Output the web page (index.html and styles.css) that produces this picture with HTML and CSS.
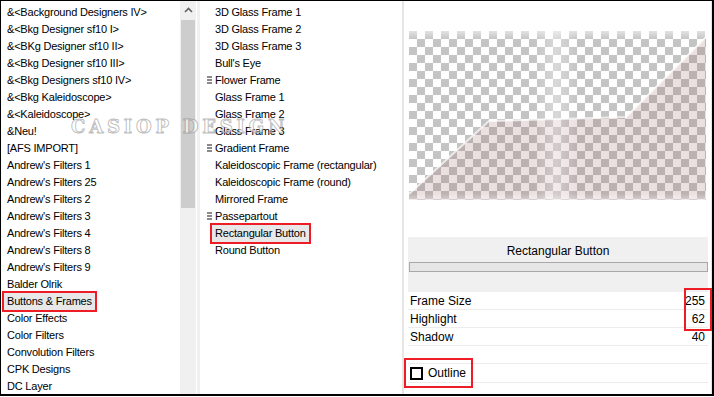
FILE: index.html
```html
<!DOCTYPE html>
<html lang="en">

<head>
    <meta charset="UTF-8">
    <title>Buttons &amp; Frames</title>
    <link rel="stylesheet" href="styles.css">
</head>

<body>
    <div class="window">
        <!-- filter categories -->
        <div class="category-list">
            <div class="item">&amp;&lt;Background Designers IV&gt;</div>
            <div class="item">&amp;&lt;Bkg Designer sf10 I&gt;</div>
            <div class="item">&amp;&lt;BKg Designer sf10 II&gt;</div>
            <div class="item">&amp;&lt;Bkg Designer sf10 III&gt;</div>
            <div class="item">&amp;&lt;Bkg Designers sf10 IV&gt;</div>
            <div class="item">&amp;&lt;Bkg Kaleidoscope&gt;</div>
            <div class="item">&amp;&lt;Kaleidoscope&gt;</div>
            <div class="item">&amp;Neu!</div>
            <div class="item">[AFS IMPORT]</div>
            <div class="item">Andrew's Filters 1</div>
            <div class="item">Andrew's Filters 25</div>
            <div class="item">Andrew's Filters 2</div>
            <div class="item">Andrew's Filters 3</div>
            <div class="item">Andrew's Filters 4</div>
            <div class="item">Andrew's Filters 8</div>
            <div class="item">Andrew's Filters 9</div>
            <div class="item">Balder Olrik</div>
            <div class="item"><span class="selected">Buttons &amp; Frames</span></div>
            <div class="item">Color Effects</div>
            <div class="item">Color Filters</div>
            <div class="item">Convolution Filters</div>
            <div class="item">CPK Designs</div>
            <div class="item">DC Layer</div>
        </div>

        <div class="scrollbar">
            <div class="scroll-up">
                <svg width="9" height="6" viewBox="0 0 9 6"><polyline points="1,5 4.5,1.5 8,5" fill="none" stroke="#606060" stroke-width="1.6"/></svg>
            </div>
            <div class="scroll-thumb"></div>
        </div>
        <div class="splitter"></div>

        <!-- filters of the chosen category -->
        <div class="filter-list">
            <div class="item">3D Glass Frame 1</div>
            <div class="item">3D Glass Frame 2</div>
            <div class="item">3D Glass Frame 3</div>
            <div class="item">Bull's Eye</div>
            <div class="item"><i class="marker"></i>Flower Frame</div>
            <div class="item">Glass Frame 1</div>
            <div class="item">Glass Frame 2</div>
            <div class="item">Glass Frame 3</div>
            <div class="item"><i class="marker"></i>Gradient Frame</div>
            <div class="item">Kaleidoscopic Frame (rectangular)</div>
            <div class="item">Kaleidoscopic Frame (round)</div>
            <div class="item">Mirrored Frame</div>
            <div class="item"><i class="marker"></i>Passepartout</div>
            <div class="item"><span class="selected">Rectangular Button</span></div>
            <div class="item">Round Button</div>
        </div>

        <!-- preview and settings -->
        <div class="settings">
            <div class="preview">
                <svg width="297" height="169" viewBox="0 0 297 169">
                    <defs>
                        <pattern id="checker" width="16" height="16" patternUnits="userSpaceOnUse">
                            <rect width="16" height="16" fill="#ffffff"/>
                            <rect x="0" y="0" width="8" height="8" fill="#c4c4c4"/>
                            <rect x="8" y="8" width="8" height="8" fill="#c4c4c4"/>
                        </pattern>
                        <linearGradient id="glow" x1="0" x2="1" y1="0" y2="0">
                            <stop offset="0" stop-color="#fff" stop-opacity="0"/>
                            <stop offset="0.5" stop-color="#fff" stop-opacity="0.35"/>
                            <stop offset="1" stop-color="#fff" stop-opacity="0"/>
                        </linearGradient>
                        <linearGradient id="haze" x1="0" x2="0" y1="0" y2="1">
                            <stop offset="0" stop-color="#fff" stop-opacity="0.5"/>
                            <stop offset="0.05" stop-color="#fff" stop-opacity="0"/>
                            <stop offset="0.96" stop-color="#fff" stop-opacity="0"/>
                            <stop offset="1" stop-color="#fff" stop-opacity="0.4"/>
                        </linearGradient>
                    </defs>
                    <rect width="297" height="169" fill="url(#checker)"/>
                    <polygon points="0,163 80,90 217,86 297,6 297,169 0,169" fill="#a06868" fill-opacity="0.2"/>
                    <polyline points="0,163 80,90 217,86 297,6" fill="none" stroke="#ffffff" stroke-opacity="0.7" stroke-width="2"/>
                    <rect x="125" y="0" width="44" height="169" fill="url(#glow)"/>
                    <rect width="297" height="169" fill="url(#haze)"/>
                </svg>
            </div>

            <div class="filter-header">
                <div class="filter-title">Rectangular Button</div>
                <div class="progress"></div>
            </div>

            <div class="param-row"><span>Frame Size</span><span>255</span></div>
            <div class="param-row"><span>Highlight</span><span>62</span></div>
            <div class="param-row"><span>Shadow</span><span>40</span></div>
            <div class="param-row"></div>
            <div class="param-row check-row">
                <span class="check-wrap"><i class="checkbox"></i>Outline</span>
            </div>

            <div class="value-mark"></div>
        </div>

        <div class="watermark">CASIOP DESIGN</div>
    </div>
</body>

</html>
```

FILE: styles.css
```css
body {
    margin: 0;
    padding: 0;
    background: #fff;
    font-family: "Liberation Sans", Arial, sans-serif;
    font-size: 11px;
    color: #000;
}

.window {
    position: relative;
    width: 714px;
    height: 396px;
    box-sizing: border-box;
    border: 1px solid #000;
    border-width: 1px 2px 2px 1px;
    display: flex;
    overflow: hidden;
    background: #fff;
}

.item {
    height: 17px;
    line-height: 17px;
    white-space: nowrap;
    letter-spacing: -0.2px;
}

.selected {
    display: inline-block;
    background: #e8e8e8;
    outline: 2px solid #ee1c25;
    padding: 0 3px;
    margin-left: -3px;
}

/* left column */
.category-list {
    width: 173px;
    padding: 3px 0 0 6px;
    flex-shrink: 0;
}

.scrollbar {
    width: 16px;
    background: #f0f0f0;
    display: flex;
    flex-direction: column;
    flex-shrink: 0;
}

.scroll-up {
    height: 18px;
    display: flex;
    align-items: center;
    justify-content: center;
}

.scroll-thumb {
    height: 188px;
    margin: 1px 1px 0 1px;
    background: #cdcdcd;
}

.splitter {
    width: 3px;
    margin-left: 1px;
    background: #f0f0f0;
    flex-shrink: 0;
}

/* middle column */
.filter-list {
    width: 187px;
    padding: 3px 0 0 15px;
    border-right: 2px solid #e6e6e6;
    flex-shrink: 0;
}

.marker {
    position: absolute;
    margin: 4px 0 0 -8px;
    width: 5px;
    height: 9px;
    background: repeating-linear-gradient(#8a8a8a 0 2px, transparent 2px 3px);
}

/* right column */
.settings {
    position: relative;
    flex: 1;
    padding: 30px 3px 0 4px;
    display: flex;
    flex-direction: column;
    border-right: 1px solid #e6e6e6;
}

.preview {
    height: 169px;
    padding-left: 1px;
    margin-bottom: 37px;
}

.preview svg {
    display: block;
}

.filter-header {
    height: 55px;
    background: #f0f0f0;
    padding-top: 6px;
    box-sizing: border-box;
}

.filter-title {
    text-align: center;
    font-size: 12px;
    line-height: 16px;
}

.progress {
    height: 8px;
    margin: 3px 0 0 1px;
    border: 1px solid #a8a8a8;
    background: #e6e6e6;
}

.param-row {
    height: 17px;
    line-height: 19px;
    border-bottom: 1px solid #ececec;
    display: flex;
    justify-content: space-between;
    padding: 0 3px 0 2px;
    font-size: 12px;
}

.check-row {
    height: 18px;
}

.check-wrap {
    display: flex;
    align-items: center;
    outline: 2px solid #ee1c25;
    margin: -4px 0 -4px -4px;
    padding: 4px 5px 4px 4px;
}

.checkbox {
    width: 9px;
    height: 9px;
    border: 2px solid #000;
    margin-right: 5px;
}

/* red note round the two changed values */
.value-mark {
    position: absolute;
    right: -1px;
    top: 287px;
    width: 24px;
    height: 39px;
    border: 2px solid #ee1c25;
}

/* watermark laid over the lists */
.watermark {
    position: absolute;
    left: 70px;
    top: 115px;
    font-family: "DejaVu Serif", serif;
    font-weight: bold;
    font-size: 18px;
    letter-spacing: 3.8px;
    color: rgba(255, 255, 255, 0.6);
    -webkit-text-stroke: 1px rgba(110, 110, 110, 0.45);
    pointer-events: none;
}
```
